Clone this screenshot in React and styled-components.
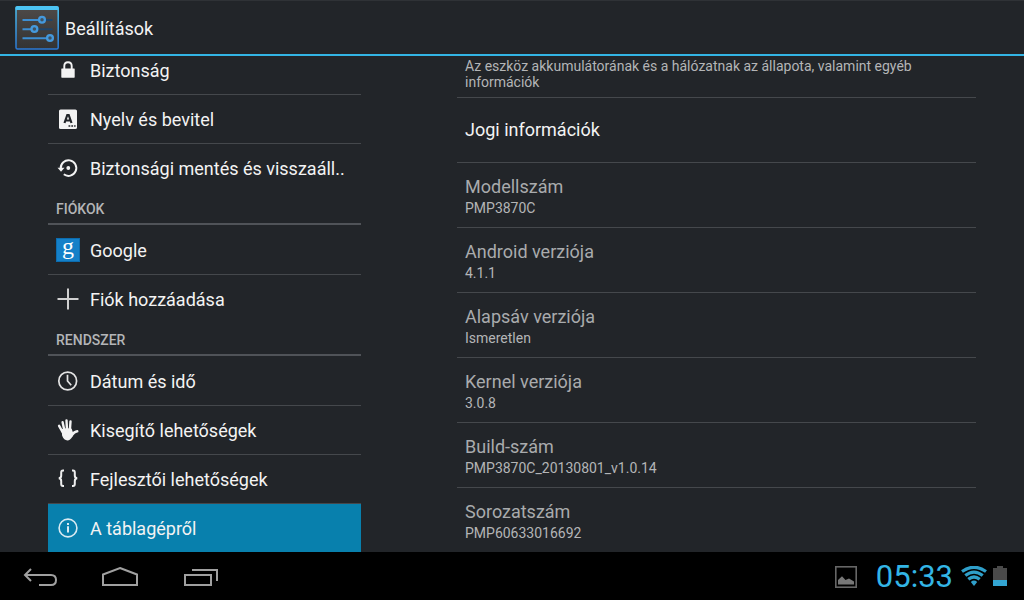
import React from 'react';
import styled, { createGlobalStyle, css } from 'styled-components';

function App() {

  return (
    <>
      <GlobalStyle />
      <Screen>
        <ActionBar>
          <SettingsIcon />
          <ActionBarTitle>Beállítások</ActionBarTitle>
        </ActionBar>

        <Panes>
          <Sidebar>
            <MenuList>
              <MenuEntry icon={<LockIcon />} label='Biztonság' />
              <MenuEntry icon={<LanguageIcon />} label='Nyelv és bevitel' />
              <MenuEntry icon={<BackupIcon />} label='Biztonsági mentés és visszaáll..' />
            </MenuList>
            <MenuHeading>FIÓKOK</MenuHeading>
            <MenuList>
              <MenuEntry icon={<GoogleIcon />} label='Google' />
              <MenuEntry icon={<PlusIcon />} label='Fiók hozzáadása' />
            </MenuList>
            <MenuHeading>RENDSZER</MenuHeading>
            <MenuList>
              <MenuEntry icon={<ClockIcon />} label='Dátum és idő' />
              <MenuEntry icon={<HandIcon />} label='Kisegítő lehetőségek' />
              <MenuEntry icon={<BracesIcon />} label='Fejlesztői lehetőségek' />
              <MenuEntry icon={<InfoIcon />} label='A táblagépről' selected />
            </MenuList>
          </Sidebar>

          <Details>
            <DetailRow>
              <Summary>Az eszköz akkumulátorának és a hálózatnak az állapota, valamint egyéb információk</Summary>
            </DetailRow>
            <DetailRow as='button' type='button'>
              <DetailTitle $enabled>Jogi információk</DetailTitle>
            </DetailRow>
            {deviceInfo.map((item) => (
              <DetailRow key={item.title}>
                <DetailTitle>{item.title}</DetailTitle>
                <Summary>{item.value}</Summary>
              </DetailRow>
            ))}
          </Details>
        </Panes>

        <SystemBar>
          <NavButtons>
            <NavButton type='button' aria-label='Vissza'>
              <svg width='36' height='24' viewBox='0 0 36 24' {...navStroke}>
                <path d='M9 4 L3 10 L9 16 M3 10 H29 Q34 10 34 15 Q34 20 29 20 H17' />
              </svg>
            </NavButton>
            <NavButton type='button' aria-label='Kezdőképernyő'>
              <svg width='38' height='24' viewBox='0 0 38 24' {...navStroke}>
                <path d='M19 3 L36 9.5 V20 H2 V9.5 Z' />
              </svg>
            </NavButton>
            <NavButton type='button' aria-label='Legutóbbiak'>
              <svg width='36' height='24' viewBox='0 0 36 24' {...navStroke}>
                <path d='M3 10 H29 V20 H3 Z M10 5 H35 V16' />
              </svg>
            </NavButton>
          </NavButtons>

          <Status>
            <PictureIcon />
            <Time>05:33</Time>
            <Signals>
              <WifiIcon />
              <BatteryIcon />
            </Signals>
          </Status>
        </SystemBar>
      </Screen>
    </>
  );
};

export default App;

const deviceInfo = [
  { title: 'Modellszám', value: 'PMP3870C' },
  { title: 'Android verziója', value: '4.1.1' },
  { title: 'Alapsáv verziója', value: 'Ismeretlen' },
  { title: 'Kernel verziója', value: '3.0.8' },
  { title: 'Build-szám', value: 'PMP3870C_20130801_v1.0.14' },
  { title: 'Sorozatszám', value: 'PMP60633016692' },
];

const navStroke = { fill: 'none', stroke: '#a0a0a0', strokeWidth: 2 };

function MenuEntry({ icon, label, selected }) {
  return (
    <MenuItem>
      <MenuButton type='button' $selected={selected} aria-current={selected ? 'page' : undefined}>
        {icon}
        <MenuLabel>{label}</MenuLabel>
      </MenuButton>
    </MenuItem>
  );
}

function SettingsIcon() {
  return (
    <svg width='44' height='44' viewBox='0 0 44 44' aria-hidden='true'>
      <defs>
        <linearGradient id='plate' x1='0' y1='0' x2='0' y2='1'>
          <stop offset='0' stopColor='#4e4a48' />
          <stop offset='1' stopColor='#333333' />
        </linearGradient>
        <linearGradient id='frame' x1='0' y1='0' x2='0' y2='1'>
          <stop offset='0' stopColor='#4cc4f4' />
          <stop offset='1' stopColor='#2a78d4' />
        </linearGradient>
      </defs>
      <rect x='1' y='0.8' width='42.2' height='42.2' rx='1.5' fill='url(#plate)' stroke='url(#frame)' strokeWidth='1.5' />
      <rect x='0.5' y='0.5' width='43' height='3.5' rx='1' fill='#4cc4f4' />
      <g strokeWidth='2'>
        <path d='M29 14 H37.5 M22 23.3 H37.5' stroke='#1f4468' />
        <path d='M7.5 14 H25 M7.5 23.3 H17 M7.5 32.3 H33' stroke='#3d8fd4' />
      </g>
      <g fill='#41525f' stroke='#4499dd' strokeWidth='2.3'>
        <circle cx='27' cy='13.7' r='2.9' />
        <circle cx='19.4' cy='23' r='2.9' />
        <circle cx='35' cy='32' r='2.9' />
      </g>
    </svg>
  );
}

function LockIcon() {
  return (
    <Icon viewBox='0 0 24 24'>
      <path d='M8.3 11 V8 Q8.3 4.2 12 4.2 Q15.7 4.2 15.7 8 V11' fill='none' stroke='#f3f3f3' strokeWidth='1.9' />
      <rect x='5.3' y='10.5' width='13.4' height='9.2' rx='0.6' fill='#f3f3f3' />
    </Icon>
  );
}

function LanguageIcon() {
  return (
    <Icon viewBox='0 0 24 24'>
      <rect x='3' y='2.5' width='18' height='19.5' rx='1.6' fill='#f3f3f3' />
      <path d='M8.5 16 L11.3 8 H12.7 L15.5 16 M9.6 13.5 H14.4' fill='none' stroke='#222529' strokeWidth='2.2' />
      <path d='M12.5 19 H14.3 M15.3 19 H17.1 M18.1 19 H19.6' stroke='#222529' strokeWidth='1.6' />
    </Icon>
  );
}

function BackupIcon() {
  return (
    <Icon viewBox='0 0 24 24'>
      <path d='M4.7 12.5 A7.8 7.8 0 1 1 7.8 18.3' fill='none' stroke='#f3f3f3' strokeWidth='2' />
      <path d='M1.5 11.8 H8.5 L5 15.8 Z' fill='#f3f3f3' />
      <circle cx='12.3' cy='12' r='1.9' fill='#f3f3f3' />
    </Icon>
  );
}

function GoogleIcon() {
  return (
    <Icon viewBox='0 0 24 24'>
      <rect width='24' height='24' fill='#0c6cae' />
      <rect x='1' y='1' width='22' height='22' fill='#1580c8' />
      <text x='12' y='16' textAnchor='middle' fontFamily='"Liberation Serif", serif' fontSize='24' fill='#fff'>g</text>
    </Icon>
  );
}

function PlusIcon() {
  return (
    <Icon viewBox='0 0 24 24'>
      <path d='M12 1.5 V22.5 M1.5 12 H22.5' stroke='#d0d0d0' strokeWidth='2' />
    </Icon>
  );
}

function ClockIcon() {
  return (
    <Icon viewBox='0 0 24 24' fill='none' stroke='#e4e4e4' strokeWidth='1.7'>
      <circle cx='11.7' cy='12' r='8.9' />
      <path d='M11.5 5.8 V12 L15.2 16.3' />
    </Icon>
  );
}

function HandIcon() {
  return (
    <Icon viewBox='0 0 24 24' fill='none' stroke='#f3f3f3' strokeLinecap='round' strokeLinejoin='round'>
      <path d='M6.6 4.2 L8.3 12 M10.5 2.4 L11 12 M14.5 3.4 L13.9 12 M3.1 7.8 L6.5 14' strokeWidth='2.4' />
      <path d='M15.5 17.5 Q18.5 13.5 21.2 13.3' strokeWidth='2.6' />
      <path d='M6.5 11.8 Q10 10.5 15 11.5 L16.2 15 L15.8 18 Q13.5 21.6 11.5 21.6 Q8.5 21.4 7 17.5 Z' fill='#f3f3f3' strokeWidth='1.8' />
    </Icon>
  );
}

function BracesIcon() {
  return (
    <Icon viewBox='0 0 24 24' fill='none' stroke='#eeeeee' strokeWidth='2'>
      <path d='M8 3.5 H7 Q5.2 3.5 5.2 5.5 V8.5 Q5.2 11.3 2.7 11.3 Q5.2 11.3 5.2 14 V17 Q5.2 19 7 19 H8' />
      <path d='M16 3.5 H17 Q18.8 3.5 18.8 5.5 V8.5 Q18.8 11.3 21.3 11.3 Q18.8 11.3 18.8 14 V17 Q18.8 19 17 19 H16' />
    </Icon>
  );
}

function InfoIcon() {
  return (
    <Icon viewBox='0 0 24 24' fill='none' stroke='#d9eaf2' strokeWidth='1.6'>
      <circle cx='12' cy='12' r='8.9' />
      <path d='M12 10.3 V16.5 M12 7 V9' strokeWidth='2' />
    </Icon>
  );
}

function PictureIcon() {
  return (
    <svg width='22' height='22' viewBox='0 0 22 22' aria-hidden='true'>
      <rect x='0.8' y='0.8' width='20.4' height='20.4' fill='none' stroke='#666' strokeWidth='1.6' />
      <path d='M3 18.5 V14 L7 10.3 L10.5 14 L14 12.5 L19 15.5 V18.5 Z' fill='#777' />
    </svg>
  );
}

function WifiIcon() {
  return (
    <svg width='26' height='22' viewBox='0 0 26 22' fill='none' stroke='#2f9fca' strokeWidth='3.2' aria-hidden='true'>
      <path d='M1 5.5 Q13 -3 25 5.5' />
      <path d='M4.3 9.6 Q13 2.8 21.7 9.6' />
      <path d='M7.3 13.3 Q13 8.7 18.7 13.3' />
      <path d='M9.8 15.9 Q13 13 16.2 15.9 L13 20 Z' fill='#2f9fca' stroke='none' />
    </svg>
  );
}

function BatteryIcon() {
  return (
    <svg width='14' height='22' viewBox='0 0 14 22' aria-hidden='true'>
      <path d='M4 0 H10 V2 H14 V15 H0 V2 H4 Z' fill='#4a4a4a' />
      <rect y='14' width='14' height='6' fill='#33a5d2' />
    </svg>
  );
}

const GlobalStyle = createGlobalStyle`
  * {
    box-sizing: border-box;
  }

  body {
    margin: 0;
    background: #222529;
    font-family: Roboto, "Liberation Sans", sans-serif;
  }

  button {
    border: 0;
    background: none;
    color: inherit;
    font: inherit;
    text-align: left;
  }

  svg {
    display: block;
    flex-shrink: 0;
  }
`;

const Screen = styled.div`
  height: 100vh;
  display: flex;
  flex-direction: column;
  color: #f3f3f3;
`;

const ActionBar = styled.header`
  height: 56px;
  flex-shrink: 0;
  display: flex;
  align-items: center;
  gap: 6px;
  padding: 0 15px;
  border-top: 1px solid #2f3236;
  border-bottom: 2px solid #33b5e5;
`;

const ActionBarTitle = styled.h1`
  margin: 0;
  padding-top: 2px;
  font-size: 18px;
  font-weight: 400;
  line-height: 24px;
`;

/* both panes are scrolled to their end */
const Panes = styled.main`
  flex: 1;
  min-height: 0;
  display: grid;
  grid-template-columns: 313fr 519fr;
  grid-template-rows: 100%;
  gap: 96px;
  padding: 0 48px;
  overflow: hidden;
`;

const pane = css`
  min-width: 0;
  display: flex;
  flex-direction: column;
  justify-content: flex-end;
`;

const Sidebar = styled.nav`
  ${pane}
`;

const Details = styled.section`
  ${pane}
`;

const MenuList = styled.ul`
  margin: 0;
  padding: 0;
  list-style: none;
`;

const MenuItem = styled.li`
  & + & {
    border-top: 1px solid #45484c;
  }
`;

const MenuButton = styled.button`
  width: 100%;
  height: 48px;
  display: flex;
  align-items: center;
  gap: 10px;
  padding: 0 8px;
  background: ${(props) => (props.$selected ? '#0880ad' : 'transparent')};
`;

const MenuLabel = styled.span`
  padding-top: 2px;
  font-size: 18px;
  line-height: 24px;
  white-space: nowrap;
`;

const MenuHeading = styled.h2`
  margin: 0 0 1px;
  padding: 8px 8px 5px;
  border-bottom: 2px solid #505358;
  color: #b4b5b7;
  font-size: 14px;
  font-weight: 500;
  line-height: 18px;
`;

const Icon = styled.svg.attrs({ 'aria-hidden': true })`
  width: 24px;
  height: 24px;
  overflow: visible;
`;

const DetailRow = styled.div`
  width: 100%;
  flex-shrink: 0;
  display: flex;
  flex-direction: column;
  justify-content: center;
  padding: 7px 8px;

  & + & {
    min-height: 65px;
    border-top: 1px solid #45484c;
  }
`;

const DetailTitle = styled.span`
  color: ${(props) => (props.$enabled ? '#f3f3f3' : '#a9abad')};
  font-size: 18px;
  line-height: 26px;
`;

const Summary = styled.span`
  color: #b4b5b7;
  font-size: 14px;
  line-height: 16px;
`;

const SystemBar = styled.footer`
  height: 48px;
  flex-shrink: 0;
  display: flex;
  align-items: center;
  justify-content: space-between;
  padding: 2px 17px 0 0;
  background: #000;
`;

const NavButtons = styled.div`
  display: flex;
`;

const NavButton = styled.button`
  width: 80px;
  height: 46px;
  display: flex;
  align-items: center;
  justify-content: center;
  padding: 0;
`;

const Status = styled.div`
  display: flex;
  align-items: center;
`;

const Time = styled.time`
  margin: 0 8px 0 19px;
  color: #33b5e5;
  font-size: 31px;
  line-height: 46px;
`;

const Signals = styled.div`
  display: flex;
  align-items: center;
  gap: 6px;
`;
